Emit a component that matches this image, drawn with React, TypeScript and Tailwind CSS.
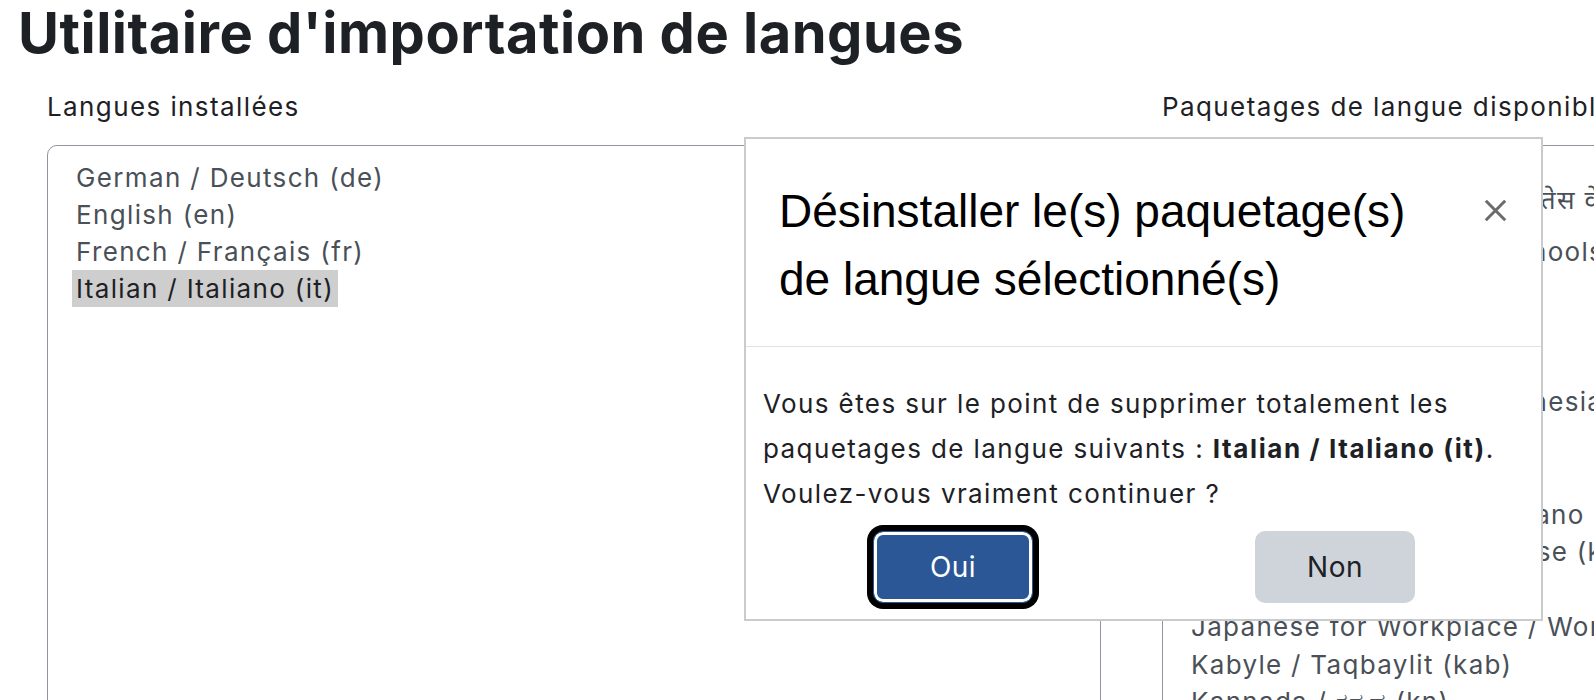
import React from "react";

const leftItems = [
  "German / Deutsch (de)",
  "English (en)",
  "French / Français (fr)",
  "Italian / Italiano (it)",
];

type Row = { text: string; h: string };

const rightRows: Row[] = [
  { text: "Hebrew / עברית (he)", h: "h-[35px]" },
  { text: "Hindi Workplace / कार्यस्थल तेस वेब (hi_wp)", h: "h-[52.25px]" },
  { text: "Hungarian / Magyar in schools (hu_sch)", h: "h-[37.5px]" },
  { text: "Icelandic / Íslenska (is)", h: "h-[37.5px]" },
  { text: "Ido (io)", h: "h-[37.5px]" },
  { text: "Igbo (ig)", h: "h-[37.5px]" },
  { text: "Indonesian / Bahasa Indonesia (id)", h: "h-[37.5px]" },
  { text: "Interlingua (ia)", h: "h-[37.5px]" },
  { text: "Irish / Gaeilge (ga)", h: "h-[37.5px]" },
  { text: "Italian in Workplace / Italiano (it_wp)", h: "h-[37.5px]" },
  { text: "Japanese (Kids) / Japanese (kids) (ja_kids)", h: "h-[37.5px]" },
  { text: "Japanese / 日本語 (ja)", h: "h-[37.5px]" },
  { text: "Japanese for Workplace / Workplace用日本語 (ja_wp)", h: "h-[37.5px]" },
  { text: "Kabyle / Taqbaylit (kab)", h: "h-[37.5px]" },
  { text: "Kannada / ಕನ್ನಡ (kn)", h: "h-[37.5px]" },
];

function CloseIcon() {
  return (
    <svg width="23" height="23" viewBox="0 0 23 23" className="block">
      <line x1="1.8" y1="1.8" x2="21.2" y2="21.2" stroke="#6b6b6b" strokeWidth="3" />
      <line x1="21.2" y1="1.8" x2="1.8" y2="21.2" stroke="#6b6b6b" strokeWidth="3" />
    </svg>
  );
}

export default function App() {
  return (
    <div className="relative w-[1594px] h-[700px] overflow-hidden bg-white font-['Inter','Noto_Sans','Noto_Sans_CJK_JP',sans-serif] text-[#1d2125]">
      <h1 className="pl-[18px] text-[56px] leading-[67px] font-bold tracking-[0.5px] whitespace-nowrap">
        Utilitaire d'importation de langues
      </h1>

      <div className="flex gap-[61px] pl-[47px] mt-[20.5px]">
        {/* Left column */}
        <div className="w-[1054px] shrink-0">
          <div className="text-[26px] leading-[37px] tracking-[1.4px] whitespace-nowrap">Langues installées</div>
          <div className="mt-[20.5px] h-[600px] border border-[#8f959e] rounded-[10px] pl-[24px] pt-[12.5px]">
            {leftItems.map((t, i) => (
              <div key={t} className="h-[37px]">
                <span
                  className={
                    "inline-block px-[4px] text-[26px] leading-[37px] tracking-[1.35px] whitespace-nowrap " +
                    (i === 3 ? "bg-[#cecece] text-[#1d2125]" : "text-[#495057]")
                  }
                >
                  {t}
                </span>
              </div>
            ))}
          </div>
        </div>

        {/* Right column */}
        <div className="w-[1054px] shrink-0">
          <div className="text-[26px] leading-[37px] tracking-[1.4px] whitespace-nowrap">Paquetages de langue disponibles</div>
          <div className="mt-[20.5px] h-[600px] border border-[#8f959e] rounded-[10px] pl-[24px] overflow-hidden">
            {rightRows.map((r) => (
              <div key={r.text} className={r.h + " shrink-0"}>
                <span className="inline-block px-[4px] text-[26px] leading-[37.5px] tracking-[1.3px] whitespace-nowrap text-[#495057]">
                  {r.text}
                </span>
              </div>
            ))}
          </div>
        </div>
      </div>

      {/* Modal dialog */}
      <div className="absolute left-[744px] top-[137px] w-[799px] bg-white border-2 border-[#cbcbcb]">
        <div className="flex items-start pl-[33px] pr-[34px] pt-[38px] pb-[33px] border-b border-[#dee2e6]">
          <h5 className="w-[660px] font-['Liberation_Sans',Arial,sans-serif] text-[46px] leading-[68px] text-black font-normal">
            Désinstaller le(s) paquetage(s) de langue sélectionné(s)
          </h5>
          <button className="ml-auto mt-[22px]" aria-label="Fermer">
            <CloseIcon />
          </button>
        </div>
        <div className="pl-[17px] pr-[17px] pt-[34px] pb-[16px]">
          <p className="text-[26px] leading-[45px] tracking-[1.4px] text-[#1d2125] whitespace-nowrap">
            Vous êtes sur le point de supprimer totalement les
            <br />
            paquetages de langue suivants : <strong className="font-bold tracking-[1.6px]">Italian / Italiano (it)</strong>.
            <br />
            Voulez-vous vraiment continuer ?
          </p>
          <div className="flex mt-[15px]">
            <button className="ml-[110px] w-[160px] h-[72px] rounded-[10px] bg-[#2b5797] border border-[#2b5797] text-white text-[28px] tracking-[0.5px] shadow-[inset_0_0_0_3px_#ffffff,0_0_0_6px_#000000]">
              Oui
            </button>
            <button className="ml-[222px] w-[160px] h-[72px] rounded-[10px] bg-[#ced4da] text-[#1d2125] text-[28px] tracking-[0.5px]">
              Non
            </button>
          </div>
        </div>
      </div>
    </div>
  );
}
